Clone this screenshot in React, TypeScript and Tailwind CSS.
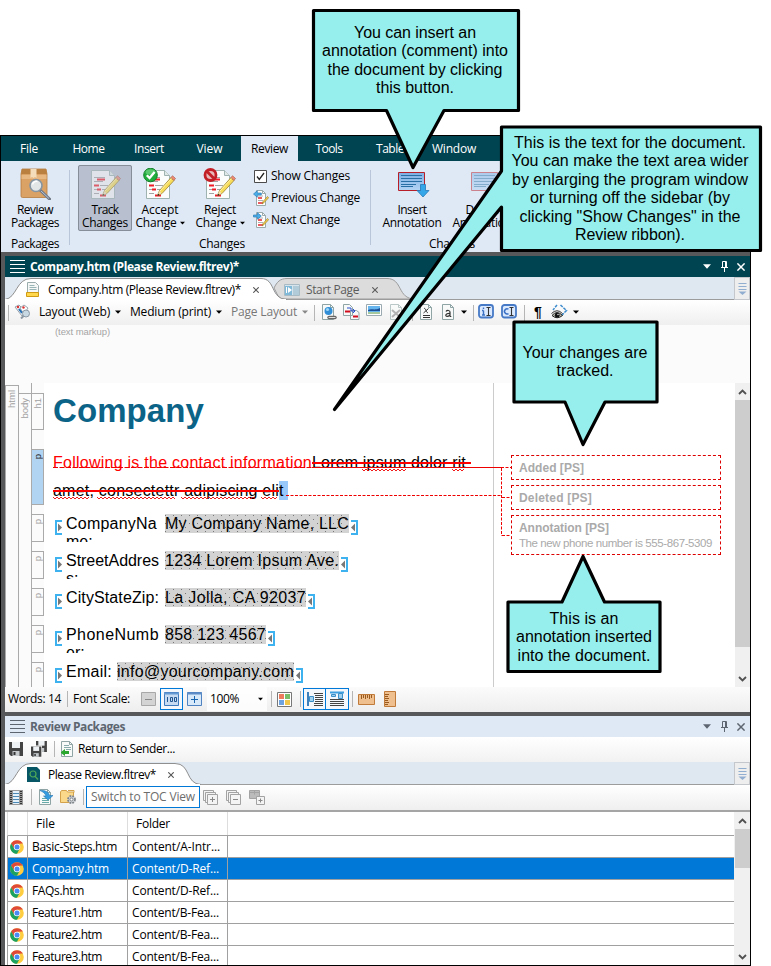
import React, { useLayoutEffect, useRef, useState } from "react";

/* Single line of text whose tracking is computed so that it spans `w` pixels. */
function F({ w, children, className = "" }: { w: number; children: string; className?: string }) {
  const ref = useRef<HTMLSpanElement>(null);
  const [ls, setLs] = useState(0);
  useLayoutEffect(() => {
    const natural = ref.current!.getBoundingClientRect().width;
    setLs((w - natural) / children.length);
  }, []);
  return (
    <span ref={ref} className={"inline-block w-max shrink-0 whitespace-pre " + className} style={{ letterSpacing: ls }}>
      {children}
    </span>
  );
}

const Caret = ({ className = "" }: { className?: string }) => (
  <svg className={"shrink-0 " + className} width="6" height="4" viewBox="0 0 6 4"><path d="M0 .5h6L3 3.7z" fill="currentColor" /></svg>
);
const Sep = ({ className = "" }: { className?: string }) => <div className={"h-4 w-px shrink-0 bg-[#b5b5b5] " + className} />;
const Cross = ({ className = "", s = 6 }: { className?: string; s?: number }) => (
  <svg className={"shrink-0 " + className} width={s} height={s} viewBox="0 0 6 6"><path d="M.3.3l5.4 5.4M5.7.3L.3 5.7" stroke="currentColor" strokeWidth="1.1" /></svg>
);

/* ---------- ribbon icons ---------- */
const Page = () => (
  <>
    <path d="M3.500 2.500h18l5 5v23h-23z" fill="#fbfcfc" stroke="#9fb3b0" />
    <path d="M21.500 2.500v5h5" fill="#dfe8e6" stroke="#9fb3b0" />
    <path d="M6 9.500h11M6 13.500h9M12 17.500h8M6 21.500h5M14 21.500h5M6 25.500h5" stroke="#a3a3a3" />
    <path d="M9 11.500h8M6 17.500h5M9 21.500h4M12 27.500h6" stroke="#f01c28" strokeWidth="2" />
  </>
);
const Pencil = () => (
  <g>
    <path d="M14.500 27.500l2-5L28 9.500l3 3-12 13z" fill="#f7dc59" stroke="#9b8330" strokeWidth=".8" />
    <path d="M17 23l12-13" stroke="#fff3a8" />
    <path d="M28 9.500l1.500-1.800 3 2.800-1.700 2z" fill="#ef8a74" stroke="#a05548" strokeWidth=".6" />
    <path d="M14.500 27.500l2-4.500 2.200 2.300z" fill="#f3dfb4" /><path d="M14.300 28l1-2.300 1.200 1.200z" fill="#222" />
  </g>
);
const ChangeIcon = ({ kind }: { kind: "track" | "accept" | "reject" }) => (
  <svg width="34" height="32" viewBox="0 0 34 32" className={kind === "track" ? "opacity-60" : ""}>
    <Page /><Pencil />
    {kind === "accept" && (<><circle cx="7.500" cy="7" r="6.800" fill="#20ad3c" stroke="#128029" /><ellipse cx="7.500" cy="4" rx="5" ry="2.800" fill="#7fd88d" opacity=".6" /><path d="M3.800 7.200l2.800 2.900 5-6" fill="none" stroke="#fff" strokeWidth="2.300" /></>)}
    {kind === "reject" && (<><circle cx="7.500" cy="7" r="5.500" fill="#e9b9b9" stroke="#c21f26" strokeWidth="2.800" /><path d="M3.500 3l8 8" stroke="#c21f26" strokeWidth="2.800" /></>)}
  </svg>
);
const BoxIcon = () => (
  <svg width="32" height="32" viewBox="0 0 32 32">
    <path d="M3 1h24l1 5v22a1.500 1.500 0 0 1-1.500 1.500h-23A1.500 1.500 0 0 1 2 28V6z" fill="#dba266" stroke="#b67b3e" strokeWidth=".8" />
    <path d="M3 1h24l1 5H2z" fill="#b9803f" /><path d="M2.500 7h25v4h-25z" fill="#e8b882" />
    <path d="M11.500 1h6v9l-1.500-1-1.500 1-1.500-1-1.500 1z" fill="#f3ddba" />
    <path d="M21 22l9.500 9" stroke="#6e7886" strokeWidth="3" strokeLinecap="round" /><path d="M22 23l8 7.500" stroke="#b9c4d2" />
    <circle cx="17" cy="17.500" r="6" fill="#e3ebf1" fillOpacity=".93" stroke="#8594a1" strokeWidth="1.600" />
    <path d="M13.500 16.500a4 4 0 0 1 5-3" stroke="#fff" strokeWidth="1.500" fill="none" />
  </svg>
);
const AnnIcon = ({ faded = false }: { faded?: boolean }) => (
  <svg width="32" height="26" viewBox="0 0 32 26" className={faded ? "opacity-50" : ""}>
    <defs><linearGradient id="ann" x1="0" y1="0" x2="0" y2="1"><stop offset="0" stopColor="#7dafe4" /><stop offset="1" stopColor="#b3d4f4" /></linearGradient></defs>
    <path d="M.5.500h26v18H.5z" fill="url(#ann)" stroke="#b81e28" />
    <path d="M3 3.500h21M3 6.500h21M3 9.500h21M3 12.500h15M3 14.500h12" stroke="#286fa5" />
    <path d="M22.500 12.500h5v6h3.500L25 25l-6-6.500h3.500z" fill="#35a7e8" stroke="#2678b7" strokeWidth=".8" />
  </svg>
);
const SmallChange = ({ next = false }: { next?: boolean }) => (
  <svg width="16" height="16" viewBox="0 0 16 16">
    <path d="M3.500.500h6l3 3v12h-9z" fill="#fff" stroke="#9aa9a9" /><path d="M9.500.500v3h3" fill="none" stroke="#9aa9a9" />
    <path d="M5 8h4M5 13h5" stroke="#e3262e" strokeWidth="1.500" /><path d="M5 6h5M5 10.500h5" stroke="#999" strokeWidth=".8" />
    <path d="M9 14l1-2.500 4.500-5 1.200 1.200-4.700 5z" fill="#f2d14d" stroke="#947425" strokeWidth=".6" />
    <path d={next ? "M.5 3h4V.8L8.300 4 4.500 7.200V5h-4z" : "M8.300 3h-4V.8L.5 4l3.800 3.200V5h4z"} fill="#4aaee8" stroke="#2c7db8" strokeWidth=".7" />
  </svg>
);

function Menu() {
  return (
    <div className="flex h-[25px] shrink-0 items-stretch bg-[#004451] text-white [&>div]:flex [&>div]:items-center [&>div]:justify-center">
      <div className="w-[56px]"><F w={18}>File</F></div>
      <div className="w-[63px]"><F w={32}>Home</F></div>
      <div className="w-[58px]"><F w={30}>Insert</F></div>
      <div className="w-[63px]"><F w={26}>View</F></div>
      <div className="w-[57px] bg-[#dfe8f5] text-black"><F w={37}>Review</F></div>
      <div className="w-[62px]"><F w={27}>Tools</F></div>
      <div className="w-[60px]"><F w={28}>Table</F></div>
      <div className="w-[68px]"><F w={44}>Window</F></div>
    </div>
  );
}

function Big({ icon, a, aw, b, bw, caret, className }: { icon: React.ReactNode; a: string; aw: number; b: string; bw: number; caret?: boolean; className: string }) {
  return (
    <div className={"flex h-[66px] shrink-0 flex-col items-center leading-[13px] " + className}>
      <div className="flex h-[38px] items-start justify-center pt-[3px]">{icon}</div>
      <F w={aw}>{a}</F>
      <div className="flex items-center"><F w={bw}>{b}</F>{caret && <Caret className="ml-[3px] mt-[1px] w-[5px]" />}</div>
    </div>
  );
}

function Ribbon() {
  return (
    <div className="flex h-[91px] shrink-0 bg-[#dfe8f5]">
      <div className="flex w-[68px] shrink-0 flex-col items-center pt-1">
        <Big className="w-[68px]" icon={<BoxIcon />} a="Review" aw={36} b="Packages" bw={48} />
        <F w={48} className="mt-[5px] leading-4">Packages</F>
      </div>
      <div className="mt-[9px] h-[75px] w-px shrink-0 bg-[#b9c6da]" />
      <div className="flex w-[300px] shrink-0 flex-col pt-1">
        <div className="flex">
          <Big className="ml-2 w-[54px] rounded-[2px] bg-[#b8c0cf] outline outline-1 -outline-offset-1 outline-[#868e9a]" icon={<ChangeIcon kind="track" />} a="Track" aw={27} b="Changes" bw={46} />
          <Big className="-ml-px w-[58px]" icon={<ChangeIcon kind="accept" />} a="Accept" aw={37} b="Change" bw={41} caret />
          <Big className="ml-[2px] w-[58px]" icon={<ChangeIcon kind="reject" />} a="Reject" aw={32} b="Change" bw={41} caret />
          <div className="ml-[4px] flex flex-col">
            <div className="flex h-[22px] items-center">
              <svg className="ml-px" width="13" height="13" viewBox="0 0 13 13"><path d="M.5.500h12v12H.5z" fill="#fff" stroke="#4b4b4b" /><path d="M3 6.500l2.300 3L10 3" fill="none" stroke="#222" strokeWidth="1.300" /></svg>
              <F w={79} className="ml-[4px]">Show Changes</F>
            </div>
            <div className="flex h-[22px] items-center"><SmallChange /><F w={89} className="ml-[2px]">Previous Change</F></div>
            <div className="flex h-[22px] items-center"><SmallChange next /><F w={69} className="ml-[2px]">Next Change</F></div>
          </div>
        </div>
        <div className="flex pl-[129px] pt-[5px]"><F w={46} className="leading-4">Changes</F></div>
      </div>
      <div className="mt-[9px] h-[75px] w-px shrink-0 bg-[#b9c6da]" />
      <div className="flex w-[170px] flex-col pt-1">
        <div className="flex">
          <Big className="ml-[7px] w-[68px]" icon={<div className="pl-[4px] pt-[4px]"><AnnIcon /></div>} a="Insert" aw={29} b="Annotation" bw={59} />
          <Big className="ml-[2px] w-[68px]" icon={<div className="pl-[10px] pt-[4px]"><AnnIcon faded /></div>} a="Delete" aw={33} b="Annotation" bw={59} />
        </div>
        <F w={46} className="ml-[58px] mt-[5px] self-start leading-4">Changes</F>
      </div>
    </div>
  );
}

const Burger = ({ className = "" }: { className?: string }) => (
  <svg className={"ml-[5px] shrink-0 " + className} width="15" height="14" viewBox="0 0 15 14"><path d="M0 .5h15M0 4.500h15M0 8.500h15M0 12.500h15" stroke="currentColor" /></svg>
);

function TitleBar({ title, w, className }: { title: string; w: number; className: string }) {
  return (
    <div className={"flex h-[21px] shrink-0 items-center " + className}>
      <Burger />
      <F w={w} className="ml-[5px] pt-px font-bold">{title}</F>
      <svg className="ml-auto" width="8" height="5" viewBox="0 0 8 5"><path d="M0 .3h8L4 4.800z" fill="currentColor" /></svg>
      <svg className="ml-[10px]" width="7" height="11" viewBox="0 0 7 11"><path d="M1.500 6V.5h4V6M0 6.500h7M3.500 6.500V11M4.500 1v5" fill="none" stroke="currentColor" /></svg>
      <Cross className="ml-[9px] mr-[5px]" s={8} />
    </div>
  );
}

const TabList = () => (
  <div className="relative ml-auto flex w-[16px] shrink-0 items-center justify-center border border-[#c4c8cc] bg-[#eeeeee]">
    <svg width="9" height="13" viewBox="0 0 9 13"><path d="M.5 1.500h8M.5 4.500h8M.5 7.500h8" stroke="#91aed0" /><path d="M.5 9.500h8l-4 3.500z" fill="#91aed0" /></svg>
  </div>
);

/* ---------- toolbar icons ---------- */
const Sheet = ({ children, w = 13 }: { children?: React.ReactNode; w?: number }) => (
  <svg className="shrink-0" width={w} height="16" viewBox={`0 0 ${w} 16`}>
    <path d="M.5.500h8l3 3v12H.5z" fill="#f8fafa" stroke="#8fa5a5" /><path d="M8.500.500v3h3" fill="none" stroke="#8fa5a5" />{children}
  </svg>
);
const ModeIcon = ({ c = false }: { c?: boolean }) => (
  <svg width="16" height="15" viewBox="0 0 16 15">
    <rect x="1" y="1" width="14" height="12.500" rx="2.500" fill="#dbe9ff" stroke="#4679c6" strokeWidth="1.800" />
    {c ? <path d="M7.500 5.200a2.600 2.600 0 1 0 0 4.400" fill="none" stroke="#3a70c4" strokeWidth="1.500" /> : <path d="M5.500 6.500V11M5.500 3.500V5M4 6.500h1.500M4 11h3" stroke="#3a70c4" strokeWidth="1.400" />}
    <path d="M8.500 3.500h4M8.500 11.500h4M10.500 3.500v8" stroke="#333" strokeWidth="1.100" />
  </svg>
);

function EditorToolbar() {
  return (
    <div className="flex h-[25px] shrink-0 items-center bg-gradient-to-b from-white to-[#efefef] pb-[2px]">
      <Sep className="ml-[3px] mt-[2px]" />
      <svg className="ml-[5px] shrink-0" width="17" height="15" viewBox="0 0 17 15">
        <path d="M1 3l4-2 7 7-4 4z" fill="#f1f3f5" stroke="#9aa5ae" /><path d="M6 4l4-3 4 3-4 6z" fill="#fff" stroke="#9aa5ae" />
        <circle cx="4" cy="3" r="1.200" fill="#d33" /><circle cx="9.500" cy="3.500" r="1.200" fill="#d33" /><path d="M5 5l3 4" stroke="#246fb5" strokeWidth="2" />
        <circle cx="12" cy="9.500" r="3.500" fill="#c9d9e4" stroke="#8b98a3" /><path d="M9.500 12l-2.500 2.500" stroke="#8b98a3" strokeWidth="2" />
      </svg>
      <F w={71} className="ml-[8px]">Layout (Web)</F><Caret className="ml-[5px] mt-px" />
      <F w={81} className="ml-[9px]">Medium (print)</F><Caret className="ml-[5px] mt-px" />
      <F w={66} className="ml-[9px] text-[#777]">Page Layout</F><Caret className="ml-[5px] mt-px text-[#888]" />
      <Sep className="ml-[6px] mt-[2px]" />
      <div className="ml-[7px] w-[22px]"><Sheet w={16}><circle cx="6.500" cy="7" r="4" fill="#2f8ed6" /><circle cx="5.500" cy="5.500" r="1.600" fill="#9bd6f8" /><path d="M7 13.500h6" stroke="#666" strokeWidth="3.500" strokeLinecap="round" /><path d="M7 13.500h6" stroke="#ddd" strokeLinecap="round" /></Sheet></div>
      <svg className="-ml-px shrink-0" width="17" height="16" viewBox="0 0 17 16">
        <path d="M.5.500h6l3 3v8H.5zM7.500 6.500h6l2.500 2v7H7.500z" fill="#f8fafa" stroke="#8fa5a5" />
        <path d="M2 7.500h5M10 12.500h5" stroke="#d00d1c" strokeWidth="2" /><path d="M4 4h4v3h3M10 5l2 2-2 2" stroke="#2a50d0" fill="none" />
      </svg>
      <svg className="ml-[6px] -mt-[3px] shrink-0" width="16" height="12" viewBox="0 0 16 12"><path d="M.5.500h15v11H.5z" fill="#fff" stroke="#9aaab0" /><path d="M2 2h12v8H2z" fill="#65b4ee" /><path d="M2 6c4-2 6 1 12-2v3H2z" fill="#1c4f96" /><path d="M2 8h12v2H2z" fill="#a7c79d" /></svg>
      <div className="ml-[8px] w-[14px] opacity-60"><Sheet><path d="M2 6l8 7M10 6l-8 7" stroke="#888" strokeWidth="2" /></Sheet></div>
      <Sep className="ml-[8px] mt-[2px]" />
      <div className="ml-[7px] w-[22px]"><Sheet><path d="M4 4.500c2-1 2 5 4 4M8.500 4.500l-5 4.500M3 11.500h7M3 13.500h7" stroke="#333" fill="none" /></Sheet></div>
      <Sheet><path d="M4 7.500c1-1.600 4-1.300 4 .5v4.500M8 9.300c-5-.3-5 3-2.800 3 1.400 0 2.800-.8 2.800-2M8 12.500h1.300" stroke="#333" strokeWidth="1.200" fill="none" /></Sheet>
      <Caret className="ml-[6px] mt-px" />
      <Sep className="ml-[6px] mt-[2px]" />
      <div className="ml-[4px] w-[23px]"><ModeIcon /></div><ModeIcon c />
      <Sep className="ml-[7px] mt-[2px]" />
      <span className="ml-[9px] w-[9px] font-['Liberation_Sans',sans-serif] text-[14px] font-bold leading-4">¶</span>
      <svg className="ml-[8px] shrink-0" width="17" height="16" viewBox="0 0 17 16">
        <path d="M6 1L2 6M9.500 1l6 5.500-5 5" fill="none" stroke="#3b8bcd" strokeWidth="1.500" strokeDasharray="3 1" />
        <path d="M.5 9.500Q6 4 11.500 9.500" fill="none" stroke="#333" /><path d="M1 11.500Q6 5.500 11.500 11.500 6 16 1 11.500z" fill="#b9b9ae" stroke="#222" /><circle cx="6.200" cy="11.200" r="2.400" fill="#111" /><circle cx="7" cy="10.500" r=".7" fill="#fff" />
      </svg>
      <Caret className="ml-[5px] mt-px" />
    </div>
  );
}

function EditorTabs() {
  return (
    <div className="relative flex h-[23px] shrink-0 items-stretch bg-[#dfe7f1]">
      <svg className="absolute left-0 top-0" width="745" height="23" viewBox="0 0 745 23">
        <path d="M0 22.500H730" stroke="#9c9c9c" strokeWidth="1" />
        <path d="M269 11C272 5 275 1.500 282 1.500H382C398 1.500 392 22 410 22H279C273 22 272 16 269 11z" fill="#dcdcdc" stroke="#9c9c9c" />
        <path d="M0 22.500C12 21 11 1.500 26 1.500H256C271 1.500 265 22 282 22.500z" fill="#fff" stroke="#8f8f8f" /><path d="M0 22.500H281" stroke="#fff" />
      </svg>
      <div className="relative flex w-[269px] items-center pt-[2px]">
        <svg className="ml-[21px] shrink-0" width="14" height="16" viewBox="0 0 14 16"><path d="M1.500.500h8l3 3v9h-11z" fill="#f6f8f8" stroke="#9aacac" /><path d="M3.500 3.500h5M3.500 5.500h7M3.500 7.500h7" stroke="#9ab5b5" /><path d="M.5 10.500h12v4H.5z" fill="#ffd84d" stroke="#d19a13" /></svg>
        <F w={193} className="ml-[8px]">Company.htm (Please Review.fltrev)*</F>
        <Cross className="ml-[12px] text-[#555]" />
      </div>
      <div className="relative flex items-center pt-[2px] text-[#5b5b5b]">
        <svg className="ml-[10px] shrink-0" width="16" height="12" viewBox="0 0 16 12"><path d="M.5.500h15v11H.5z" fill="#d8e4ec" stroke="#a8bac4" /><path d="M1 2h7v9H1z" fill="#80b8d8" /><path d="M9 2h6v9H9z" fill="#b2cbd8" /><path d="M4 3l4 3-4 3zM2 3h1v6H2z" fill="#fff" /></svg>
        <F w={53} className="ml-[6px]">Start Page</F><Cross className="ml-[13px]" />
      </div>
      <TabList />
    </div>
  );
}

/* ---------- document ---------- */
const Tag = ({ children, className = "", selected = false }: { children: string; className?: string; selected?: boolean }) => (
  <div className={"flex shrink-0 justify-center border border-[#aaaaaa] pt-[4px] font-['Liberation_Sans',sans-serif] text-[9.500px] leading-[10px] " + (selected ? "bg-[#b1d4f3] text-[#222] " : "text-[#a0a0a0] ") + className}>
    <span className="h-max rotate-180 [writing-mode:vertical-rl]">{children}</span>
  </div>
);
const LBracket = () => <svg className="mt-[5px] shrink-0" width="7" height="15" viewBox="0 0 7 15"><path d="M7 1H1v13h6" fill="none" stroke="#3eb1ef" strokeWidth="2" /><path d="M3 3.500v8l4-4z" fill="#777" /></svg>;
const RBracket = () => <svg className="ml-[2px] mt-[5px] shrink-0" width="7" height="15" viewBox="0 0 7 15"><path d="M0 1h6v13H0" fill="none" stroke="#3eb1ef" strokeWidth="2" /><path d="M4 3.500v8l-4-4z" fill="#777" /></svg>;

function Field({ label, lw, rest, value, vw, wide = true }: { label: string; lw: number; rest?: string; value: string; vw: number; wide?: boolean }) {
  return (
    <div className="mb-[9px] flex h-[28px] shrink-0 items-start overflow-hidden pl-[11px] pt-px leading-[18px]">
      <LBracket />
      <div className={"ml-[4px] flex shrink-0 flex-col " + (wide ? "w-[99px]" : "w-[51px]")}>
        <F w={lw} className="self-start">{label}</F>{rest && <span>{rest}</span>}
      </div>
      <div className="-mt-px h-[19px] shrink-0 bg-[#d3d3d3] bg-[linear-gradient(#888_1px,transparent_1px),linear-gradient(#888_1px,transparent_1px)] bg-[length:1px_8px,1px_8px] pt-px">
        <div className="h-[19px] -mt-px bg-[conic-gradient(from_0deg_at_1px_1px,transparent_75%,#777_0),conic-gradient(from_0deg_at_1px_1px,transparent_75%,#777_0)] bg-[length:8px_8px] bg-[position:0_1px,4px_5px] bg-[#d3d3d3] pt-px">
          <F w={vw}>{value}</F>
        </div>
      </div>
      <RBracket />
    </div>
  );
}

function zig(x: number, x2: number, y: number) {
  let d = `M${x} ${y}`;
  for (let i = 1; x + i * 2 <= x2; i++) d += `L${x + i * 2} ${y + (i % 2 ? 2 : 0)}`;
  return d;
}

function ReviewCard({ title, w, note, className }: { title: string; w: number; note?: string; className: string }) {
  return (
    <div className={"shrink-0 border border-dashed border-[#d00] pl-[7px] pt-[5px] leading-[15px] text-[#aaa] " + className}>
      <F w={w} className="block text-[12px] font-bold">{title}</F>
      {note && <F w={193} className="block text-[11.500px]">{note}</F>}
    </div>
  );
}

const ScrollArrow = ({ up = false }: { up?: boolean }) => (
  <svg width="9" height="6" viewBox="0 0 9 6"><path d={up ? "M1 5l3.500-3.500L8 5" : "M1 1l3.500 3.500L8 1"} fill="none" stroke="#505050" strokeWidth="1.800" /></svg>
);

function Document() {
  return (
    <div className="relative flex h-[304px] shrink-0 overflow-hidden bg-[#fbfbfb]">
      <Tag className="mt-[2px] h-[310px] w-[14px]">html</Tag>
      <Tag className="-ml-px mt-[10px] h-[310px] w-[14px]">body</Tag>
      <div className="-ml-px flex w-[13px] shrink-0 flex-col border-l border-[#aaa] pt-[10px] [&>div]:-ml-px">
        <Tag className="h-[37px]">h1</Tag>
        <Tag className="mt-[19px] h-[56px]" selected>p</Tag>
        <Tag className="mt-[9px] h-[28px]">p</Tag>
        <Tag className="mt-[9px] h-[28px]">p</Tag>
        <Tag className="mt-[9px] h-[28px]">p</Tag>
        <Tag className="mt-[9px] h-[28px]">p</Tag>
        <Tag className="mt-[9px] h-[40px]">p</Tag>
      </div>
      <div className="flex w-[450px] shrink-0 flex-col border-r border-[#ccc] bg-white font-['Liberation_Sans',sans-serif] text-[16px]">
        <h1 className="mt-[8px] h-[40px] pl-[9px] text-[33px] font-bold leading-[40px] text-[#0b6488]"><F w={151}>Company</F></h1>
        <div className="mt-[18px] flex h-[28px] pl-[9px] leading-[28px]">
          <F w={259} className="text-[#f00]">Following is the contact information</F><F w={154}>Lorem ipsum dolor rit</F>
        </div>
        <div className="mb-[9px] flex h-[28px] items-start pl-[9px] leading-[28px]">
          <F w={226}>{"amet, consectettr adipiscing eli"}</F><span className="mt-[4px] h-[19px] w-[9px] bg-[#99c9fb] leading-[20px]">t</span>
        </div>
        <Field label="CompanyNa" lw={91} rest="me:" value="My Company Name, LLC" vw={184} />
        <Field label="StreetAddres" lw={93} rest="s:" value="1234 Lorem Ipsum Ave." vw={174} />
        <Field label="CityStateZip:" lw={93} value="La Jolla, CA 92037" vw={141} />
        <Field label="PhoneNumb" lw={93} rest="er:" value="858 123 4567" vw={101} />
        <Field label="Email:" lw={46} value="info@yourcompany.com" vw={177} wide={false} />
      </div>
      <div className="flex flex-1 flex-col bg-white pl-[17px] pt-[72px] font-['Liberation_Sans',sans-serif]">
        <ReviewCard title="Added [PS]" w={65} className="h-[25px] w-[210px]" />
        <ReviewCard title="Deleted [PS]" w={73} className="mt-[5px] h-[25px] w-[210px]" />
        <ReviewCard title="Annotation [PS]" w={90} note="The new phone number is 555-867-5309" className="mt-[5px] h-[40px] w-[210px]" />
      </div>
      <div className="flex w-[15px] shrink-0 flex-col items-center bg-[#f0f0f0]">
        <div className="flex h-[17px] items-center"><ScrollArrow up /></div>
        <div className="h-[247px] w-full bg-[#cdcdcd]" />
        <div className="mt-auto flex h-[17px] items-center"><ScrollArrow /></div>
      </div>
      {/* tracked-change marks and the leader lines to the cards */}
      <svg className="pointer-events-none absolute left-0 top-0" width="745" height="304" viewBox="5 383 745 304" fill="none" stroke="#e00">
        <path d="M53 467.500H312" strokeDasharray="5 1.500" /><path d="M312 467.500H501" />
        <path d="M501 467.500h10M501.500 468v68M502 497.500h9M502 535.500h9M286 495.500H501" strokeDasharray="3 1.500" />
        <path d="M312 463H471M53 491H279" strokeWidth="2" stroke="#f00" />
        <path d={zig(362, 407, 469) + zig(452, 465, 469) + zig(53, 89, 497) + zig(97, 176, 497) + zig(181, 256, 497) + zig(261, 278, 497)} strokeWidth=".9" />
      </svg>
    </div>
  );
}

function StatusBar() {
  return (
    <div className="flex h-[25px] shrink-0 items-center bg-gradient-to-b from-[#fbfbfb] to-[#eeeeee] pb-px">
      <F w={53} className="ml-[3px]">Words: 14</F><Sep className="ml-[6px]" />
      <F w={57} className="ml-[5px]">Font Scale:</F>
      <svg className="ml-[11px] shrink-0" width="15" height="14" viewBox="0 0 15 14"><path d="M.5.500h14v13H.5z" fill="#d4d4d4" stroke="#a8a8a8" /><path d="M4 7.500h7" stroke="#888" /></svg>
      <div className="ml-[4px] flex h-[22px] w-[23px] shrink-0 items-center justify-center border border-[#0078d7] bg-[#f4f8fc]">
        <svg width="15" height="14" viewBox="0 0 15 14"><path d="M.5.500h14v13H.5z" fill="#c6dbf2" stroke="#3e78bd" /><path d="M0 1.500h15" stroke="#6499d3" strokeWidth="2" /><path d="M3.500 5v5M6.500 5.500h2v4h-2zM10.500 5.500h2v4h-2z" fill="none" stroke="#20558f" /></svg>
      </div>
      <svg className="ml-[4px] shrink-0" width="15" height="14" viewBox="0 0 15 14"><path d="M.5.500h14v13H.5z" fill="#d8e9fa" stroke="#4f82c1" /><path d="M0 1.500h15" stroke="#5d8cc7" strokeWidth="2" /><path d="M4 7.500h7M7.500 4v7" stroke="#1864ae" /></svg>
      <div className="ml-[5px] flex h-full w-[60px] shrink-0 items-center bg-white/80 pl-[3px]"><F w={29}>100%</F><Caret className="ml-auto mr-[4px] w-[5px]" /></div>
      <Sep className="ml-[4px]" />
      <svg className="ml-[5px] shrink-0" width="15" height="15" viewBox="0 0 15 15"><path d="M.5.500h14v14H.5z" fill="#fff" stroke="#777" /><path d="M2 2h5v5H2z" fill="#ef7b5e" /><path d="M8 2h5v5H8z" fill="#79bd68" /><path d="M2 8h5v5H2z" fill="#6da2df" /><path d="M8 8h5v5H8z" fill="#efc64a" /></svg>
      <Sep className="ml-[8px]" />
      <div className="ml-[2px] flex h-[22px] w-[23px] shrink-0 items-center justify-center border border-[#0078d7] bg-[#f4f8fc]">
        <svg width="16" height="16" viewBox="0 0 16 16"><path d="M1 1v14" stroke="#3d7fbb" strokeWidth="2" /><path d="M2.500 5.500h4v5h-4z" fill="#9fd0f0" stroke="#3a8fc8" /><path d="M7 2.500h9M8 4.500h8M8 6.500h8M8 8.500h8M8 10.500h8M7 12.500h9M7 14.500h9" stroke="#444" /></svg>
      </div>
      <div className="-ml-px flex h-[22px] w-[24px] shrink-0 items-center justify-center border border-[#0078d7] bg-[#f4f8fc]">
        <svg width="16" height="16" viewBox="0 0 16 16"><path d="M1 1.500h14" stroke="#3d9fe0" strokeWidth="2" /><path d="M2.500 3.500h4v2h-4zM9.500 2.500h4v5h-4z" fill="#9fd0f0" stroke="#3a8fc8" /><path d="M1 8.500h14M1 10.500h14M1 12.500h14M1 14.500h14" stroke="#444" /></svg>
      </div>
      <Sep className="ml-[3px]" />
      <svg className="ml-[5px] shrink-0" width="17" height="11" viewBox="0 0 17 11"><path d="M.5.500h16v10H.5z" fill="#efc08e" stroke="#c07a3a" /><path d="M3.500 1v4M5.500 1v3M7.500 1v4M9.500 1v3M11.500 1v4M13.500 1v3" stroke="#9a5a1e" /></svg>
      <svg className="ml-[9px] shrink-0" width="12" height="16" viewBox="0 0 12 16"><path d="M.5.500h11v15H.5z" fill="#efc08e" stroke="#c07a3a" /><path d="M1 3.500h4M1 5.500h3M1 7.500h4M1 9.500h3M1 11.500h4M1 13.500h3" stroke="#9a5a1e" /></svg>
    </div>
  );
}

/* ---------- review packages ---------- */
const Floppy = ({ x = 0, y = 0, s = 1 }: { x?: number; y?: number; s?: number }) => (
  <g transform={`translate(${x} ${y}) scale(${s})`}><path d="M0 0h14v14H2L0 12z" fill="#444" /><path d="M3 0h8v6H3z" fill="#eef1f3" /><path d="M3.500 9h7v5h-7z" fill="#c5c9cc" /><path d="M4.500 10h2v3h-2z" fill="#333" /></g>
);
const Chrome = () => (
  <svg width="14" height="14" viewBox="0 0 14 14">
    <circle cx="7" cy="7" r="6.800" fill="#ffcd40" />
    <path d="M1.100 3.600A6.800 6.800 0 0 1 12.900 3.600L7 3.700 4.200 8.600z" fill="#df4a38" />
    <path d="M1.100 3.600L4.200 8.600 9.800 8.600 7 13.800A6.800 6.800 0 0 1 1.100 3.600z" fill="#1ba160" />
    <circle cx="7" cy="7" r="3.200" fill="#fff" /><circle cx="7" cy="7" r="2.500" fill="#4a8af4" />
  </svg>
);
const StackIcon = ({ plus = false, pack = false }: { plus?: boolean; pack?: boolean }) => (
  <svg className="shrink-0" width="16" height="15" viewBox="0 0 16 15" fill="#f4f4f4" stroke="#a3a3a3">
    {pack ? <path d="M.5.500h10v8H.5zM.5 2.500h10M5.500.500v4" fill="#bbb" /> : <><path d="M.5.500h10v10H.5z" /><path d="M2.500 2.500h10v10h-10z" /></>}
    <path d={pack ? "M7.500 6.500h8v8h-8z" : "M4.500 4.500h10v10h-10z"} /><path d={pack ? "M9.500 10.500h4M11.500 8.500v4" : plus ? "M7 9.500h5M9.500 7v5" : "M7 9.500h5"} stroke="#888" />
  </svg>
);

const rows: [string, number, string, number][] = [
  ["Basic-Steps.htm", 85, "Content/A-Intr...", 88],
  ["Company.htm", 77, "Content/D-Ref...", 87],
  ["FAQs.htm", 52, "Content/D-Ref...", 87],
  ["Feature1.htm", 70, "Content/B-Fea...", 87],
  ["Feature2.htm", 70, "Content/B-Fea...", 87],
  ["Feature3.htm", 70, "Content/B-Fea...", 87],
];

function Packages() {
  return (
    <>
      <TitleBar title="Review Packages" w={95} className="bg-[#dfe8f5] text-[#5d6670]" />
      <div className="flex h-[25px] shrink-0 items-center bg-gradient-to-b from-white to-[#f2f2f2] pb-[2px]">
        <svg className="ml-[4px] shrink-0" width="14" height="14" viewBox="0 0 14 14"><Floppy /></svg>
        <svg className="ml-[8px] shrink-0" width="16" height="16" viewBox="0 0 16 16"><Floppy x={5} s={0.78} /><path d="M0 4.500h11v11.500H0z" fill="#fff" /><Floppy y={5.500} s={0.74} /></svg>
        <Sep className="ml-[7px]" />
        <div className="ml-[6px] w-[17px] shrink-0"><Sheet><path d="M3 4.500h5M3 6.500h7M5 8.500h5" stroke="#8aa" /><path d="M8 10H4V8L-.5 11.500 4 15v-2h4z" fill="#2aa52e" /></Sheet></div>
        <F w={97}>Return to Sender...</F>
      </div>
      <div className="relative flex h-[23px] shrink-0 items-stretch bg-[#dfe7f1]">
        <svg className="absolute left-0 top-0" width="745" height="23" viewBox="0 0 745 23"><path d="M0 22.500H730" stroke="#9c9c9c" /><path d="M0 22.500C12 21 11 1.500 26 1.500H170C186 1.500 180 22 196 22.500z" fill="#fff" stroke="#8f8f8f" /><path d="M0 22.500H195" stroke="#fff" /></svg>
        <div className="relative flex items-center pt-[2px]">
          <svg className="ml-[22px] shrink-0" width="13" height="15" viewBox="0 0 13 15"><path d="M0 0h10l3 3v12H0z" fill="#075666" /><circle cx="6" cy="7" r="3" fill="none" stroke="#4ea758" strokeWidth="1.200" /><path d="M8 9.200l3 3.300" stroke="#4ea758" strokeWidth="1.300" /></svg>
          <F w={108} className="ml-[8px]">Please Review.fltrev*</F><Cross className="ml-[12px] text-[#555]" />
        </div>
        <TabList />
      </div>
      <div className="flex h-[25px] shrink-0 items-center bg-gradient-to-b from-white to-[#efefef] pb-px">
        <svg className="ml-[4px] shrink-0" width="14" height="15" viewBox="0 0 14 15"><path d="M0 0h14v15H0z" fill="#999" /><path d="M4 1h6v13H4z" fill="#e4f0fa" /><path d="M4 3.500h6M4 6.500h6M4 9.500h6M4 12.500h6" stroke="#4c89b5" /><path d="M2 1v13M12 1v13" stroke="#333" strokeWidth="2" strokeDasharray="1 1" /></svg>
        <Sep className="ml-[8px]" />
        <div className="ml-[7px] w-[21px]"><Sheet w={15}><path d="M3 9.500h7M3 11.500h7M3 13.500h7" stroke="#6aa" /><path d="M1 1.500C6 1 10 3 10.500 6.500H14L9 11 4.500 7H7C6 4 4 3 1 1.500z" fill="#369ce0" stroke="#2476b4" strokeWidth=".6" /></Sheet></div>
        <svg className="shrink-0" width="17" height="16" viewBox="0 0 17 16"><path d="M.5 3V13.500h13V3h-6l-1-1.500h-5z" fill="#fbd98a" stroke="#d3a24a" /><path d="M8 1.500h6v2" fill="none" stroke="#d3a24a" /><circle cx="11.500" cy="10.500" r="3.500" fill="#d5d8dc" stroke="#7f858b" strokeWidth="1.800" strokeDasharray="1.800 1" /><circle cx="11.500" cy="10.500" r="1.500" fill="#fff" stroke="#7f858b" /></svg>
        <Sep className="ml-[6px]" />
        <div className="ml-[2px] flex h-[22px] w-[114px] shrink-0 items-center border border-[#0078d7] bg-white pl-[4px] text-[#6d6d6d]"><F w={104}>Switch to TOC View</F></div>
        <div className="ml-[3px] flex gap-[7px]"><StackIcon plus /><StackIcon /><StackIcon pack /></div>
      </div>
      <div className="flex min-h-0 flex-1 border-t-2 border-[#a5a5a5] bg-white">
        <div className="ml-[2px] flex w-[727px] shrink-0 flex-col overflow-hidden">
          <div className="flex h-[24px] shrink-0 border-b border-[#a0a0a0] border-l border-l-[#ddd] [&>div]:flex [&>div]:items-center [&>div]:border-r [&>div]:border-[#ddd]">
            <div className="w-[20px]" /><div className="w-[100px] pl-[8px]"><F w={19}>File</F></div><div className="w-[100px] pl-[8px]"><F w={34}>Folder</F></div>
          </div>
          {rows.map(([file, fw, folder, dw], i) => (
            <div key={file} className={"flex h-[22px] shrink-0 border-b border-l border-[#a0a0a0] [&>div]:flex [&>div]:items-center [&>div]:border-r [&>div]:border-[#a0a0a0] " + (i === 1 ? "bg-[#0078d7] text-white" : "")}>
              <div className="w-[20px] pl-[2px]"><Chrome /></div>
              <div className="w-[100px] pl-[4px] pt-px"><F w={fw}>{file}</F></div>
              <div className="w-[100px] pl-[4px] pt-px"><F w={dw}>{folder}</F></div>
            </div>
          ))}
        </div>
        <div className="flex w-[16px] shrink-0 flex-col items-center bg-[#f0f0f0]">
          <div className="flex h-[17px] items-center"><ScrollArrow up /></div>
          <div className="h-[39px] w-[15px] bg-[#cdcdcd]" />
          <div className="mt-auto flex h-[17px] items-center"><ScrollArrow /></div>
        </div>
      </div>
    </>
  );
}

function Note({ lines, className }: { lines: [string, number][]; className: string }) {
  return (
    <div className={"absolute flex flex-col items-center font-['Liberation_Sans',sans-serif] text-[16px] leading-[18.400px] text-black " + className}>
      {lines.map(([t, w]) => <F key={t} w={w}>{t}</F>)}
    </div>
  );
}

export default function App() {
  return (
    <div className="relative h-[966px] w-[771px] overflow-hidden bg-white pt-[135px] font-['Open_Sans','Noto_Sans',sans-serif] text-[12px] leading-4 text-black">
      <div className="flex h-[831px] w-[751px] flex-col border border-black bg-[#57585a]">
        <Menu />
        <Ribbon />
        <div className="ml-[4px] mt-[4px] flex min-h-0 flex-1 flex-col">
          <TitleBar title="Company.htm (Please Review.fltrev)*" w={209} className="bg-[#004451] text-white" />
          <EditorTabs />
          <EditorToolbar />
          <div className="h-[58px] shrink-0 bg-[#fbfbfb] pl-[50px] font-['Liberation_Sans',sans-serif] text-[9.500px] leading-[14px] text-[#a5a5a5]"><F w={55}>(text markup)</F></div>
          <Document />
          <StatusBar />
          <div className="h-[4px] shrink-0" />
          <Packages />
        </div>
      </div>

      <svg className="pointer-events-none absolute left-0 top-0" width="771" height="966" viewBox="0 0 771 966" fill="#96efec" stroke="#000" strokeWidth="3.200" strokeLinejoin="round">
        <path d="M313.500 10.500H518.500V110.500H444L413 167.500 386.500 110.500H313.500z" />
        <path d="M501.500 127H760.500V250.500H501.500V207L334.500 409.500 501.500 171z" />
        <path d="M514 322H657V402H605L583 444.500 565 402H514z" />
        <path d="M508 602H562L583 556.500 604.500 602H660V671.500H508z" />
      </svg>
      <Note className="left-[313px] top-[24px] w-[204px]" lines={[["You can insert an", 122], ["annotation (comment) into", 186], ["the document by clicking", 175], ["this button.", 78]]} />
      <Note className="left-[501px] top-[134px] w-[258px]" lines={[["This is the text for the document.", 232], ["You can make the text area wider", 237], ["by enlarging the program window", 236], ["or turning off the sidebar (by", 200], ['clicking "Show Changes" in the', 221], ["Review ribbon).", 110]]} />
      <Note className="left-[514px] top-[344px] w-[142px]" lines={[["Your changes are", 125], ["tracked.", 57]]} />
      <Note className="left-[508px] top-[610px] w-[152px]" lines={[["This is an", 69], ["annotation inserted", 136], ["into the document.", 133]]} />
    </div>
  );
}
